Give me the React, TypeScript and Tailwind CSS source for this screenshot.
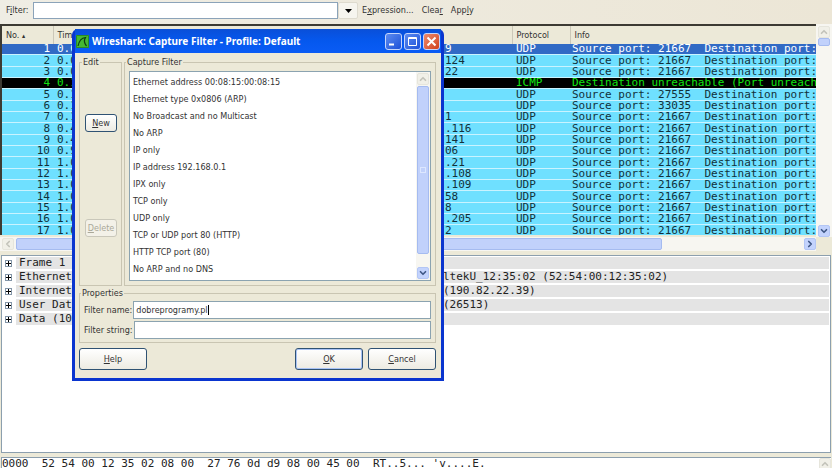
import type { ReactNode } from 'react';
import { ChevronDown, ChevronLeft, ChevronRight, ChevronUp } from 'lucide-react';
import { clsx } from 'clsx';

type Packet = {
  no: number;
  time: string;
  dest: string;
  protocol: string;
  info: string;
};

const udp = (no: number, time: string, dest: string, port = 21667): Packet => ({
  no,
  time,
  dest,
  protocol: 'UDP',
  info: `Source port: ${port}  Destination port:`,
});

const packets: Packet[] = [
  udp(1, '0.0', '9'),
  udp(2, '0.0', '124'),
  udp(3, '0.0', '22'),
  { no: 4, time: '0.1', dest: '', protocol: 'ICMP', info: 'Destination unreachable (Port unreach' },
  udp(5, '0.1', '', 27555),
  udp(6, '0.1', '', 33035),
  udp(7, '0.1', '1'),
  udp(8, '0.4', '.116'),
  udp(9, '0.4', '141'),
  udp(10, '0.9', '06'),
  udp(11, '1.0', '.21'),
  udp(12, '1.0', '.108'),
  udp(13, '1.0', '.109'),
  udp(14, '1.0', '58'),
  udp(15, '1.0', '8'),
  udp(16, '1.0', '.205'),
  udp(17, '1.0', '2'),
];

const details = [
  { label: 'Frame 1', rest: '' },
  { label: 'Ethernet', rest: 'ltekU_12:35:02 (52:54:00:12:35:02)' },
  { label: 'Internet', rest: '(190.82.22.39)' },
  { label: 'User Dat', rest: '(26513)' },
  { label: 'Data (10', rest: '' },
];

const filters = [
  'Ethernet address 00:08:15:00:08:15',
  'Ethernet type 0x0806 (ARP)',
  'No Broadcast and no Multicast',
  'No ARP',
  'IP only',
  'IP address 192.168.0.1',
  'IPX only',
  'TCP only',
  'UDP only',
  'TCP or UDP port 80 (HTTP)',
  'HTTP TCP port (80)',
  'No ARP and no DNS',
];

const scrollIcons = {
  up: ChevronUp,
  down: ChevronDown,
  left: ChevronLeft,
  right: ChevronRight,
};

function ScrollButton({ dir, disabled }: { dir: keyof typeof scrollIcons; disabled?: boolean }) {
  const Icon = scrollIcons[dir];
  return (
    <button
      aria-label={`Scroll ${dir}`}
      disabled={disabled}
      className={clsx(
        'flex size-3 shrink-0 items-center justify-center rounded-xs border',
        disabled ? 'border-[#e6e5dc] bg-[#f1f0e8] text-[#c3c3ba]' : 'border-[#b3c6f5] bg-[#c3d3fd] text-[#3f5786]',
      )}
    >
      <Icon size={10} strokeWidth={4} />
    </button>
  );
}

function DialogButton({
  children,
  className,
  disabled,
}: {
  children: ReactNode;
  className?: string;
  disabled?: boolean;
}) {
  return (
    <button
      disabled={disabled}
      className={clsx(
        'shrink-0 rounded-[3px] border',
        disabled
          ? 'border-[#c9c7ba] bg-[#f3f1e8] text-[#aaa899]'
          : 'border-[#2f5273] bg-linear-to-b from-white to-[#edebe2] text-[#333]',
        className,
      )}
    >
      {children}
    </button>
  );
}

function Toolbar() {
  return (
    <div className="flex h-6 shrink-0 items-start bg-linear-to-r from-[#efede4] to-[#ece6d6]">
      <label htmlFor="display-filter" className="w-[33px] pt-1 pl-[6px]">
        F<u>i</u>lter:
      </label>
      <input id="display-filter" className="mt-[2px] h-[17px] w-[305px] border border-[#8ba3b9] bg-white px-1" />
      <button
        aria-label="Filter history"
        className="mt-[2px] flex h-[17px] w-5 items-center justify-center rounded-xs border border-[#dedbcf] bg-[#f6f5ef]"
      >
        <svg width="7" height="4" viewBox="0 0 7 4">
          <path d="M0 0h7L3.500 4z" fill="#000" />
        </svg>
      </button>
      <div className="flex gap-2 pt-1 pl-1">
        <button>
          E<u>x</u>pression...
        </button>
        <button>
          Clea<u>r</u>
        </button>
        <button>
          App<u>l</u>y
        </button>
      </div>
    </div>
  );
}

function PacketList() {
  return (
    <div className="flex shrink-0">
      <div className="min-w-0 flex-1">
        <div className="h-[211px] overflow-hidden border-t-2 border-l-2 border-[#3c3a33] bg-white">
          <table className="h-[211px] w-full table-fixed border-collapse font-['DejaVu_Sans_Mono',monospace] text-[11px] leading-[10px] whitespace-pre">
            <colgroup>
              <col className="w-[51px]" />
              <col className="w-[390px]" />
              <col className="w-[69px]" />
              <col className="w-[58px]" />
              <col />
            </colgroup>
            <thead className="bg-[#ece9d8] text-left font-['DejaVu_Sans_Condensed','DejaVu_Sans',sans-serif] text-[9px]">
              <tr className="h-[18px]">
                <th className="border-r border-[#cbc7b8] pl-1 font-normal">
                  No. <span className="text-[7px]">▴</span>
                </th>
                <th className="pl-1 font-normal">Time</th>
                <th className="border-r border-[#cbc7b8]" />
                <th className="pl-1 font-normal">Protocol</th>
                <th className="border-l border-[#cbc7b8] pl-1 font-normal">Info</th>
              </tr>
            </thead>
            <tbody>
              {packets.map((p) => (
                <tr
                  key={p.no}
                  className={clsx(
                    'border-b border-[#c9f3ff]',
                    p.no === 1 && 'bg-[#316ac5] text-white',
                    p.no === 4 && 'bg-black text-[#12e412]',
                    p.no !== 1 && p.no !== 4 && 'bg-[#6fe0ff] text-[#12303a]',
                  )}
                >
                  <td className="pr-[3px] text-right">{p.no}</td>
                  <td className="pl-1">{p.time}</td>
                  <td className="pl-[2px]">{p.dest}</td>
                  <td className="pl-1">{p.protocol}</td>
                  <td className="pl-[2px]">{p.info}</td>
                </tr>
              ))}
            </tbody>
          </table>
        </div>
        <div className="mt-[2px] flex h-[14px] items-center bg-[#f7f6f1] pl-[2px]">
          <ScrollButton dir="left" disabled />
          <div className="flex-1 pl-[2px]">
            <div className="h-3 w-[82%] rounded-xs border border-[#a5bbf0] bg-[#c1d1fb]" />
          </div>
          <ScrollButton dir="right" />
        </div>
      </div>
      <div className="mb-[14px] flex w-4 flex-col items-center bg-[#f7f6f1] pt-[2px]">
        <ScrollButton dir="up" disabled />
        <div className="h-2 w-3 rounded-xs border border-[#a5bbf0] bg-[#c1d1fb]" />
        <div className="flex-1" />
        <ScrollButton dir="down" />
      </div>
    </div>
  );
}

function PacketDetails() {
  return (
    <div className="mt-1 mr-px ml-px min-h-0 flex-1 overflow-hidden border border-[#8c9fae] bg-white pr-px font-['DejaVu_Sans_Mono',monospace] text-[11px] leading-[12px] whitespace-pre text-[#222]">
      {details.map((row) => (
        <div key={row.label} className="flex h-[14px] items-center">
          <button
            aria-label={`Expand ${row.label}`}
            className="mr-1 ml-[3px] flex size-[7px] shrink-0 items-center justify-center border border-[#8496a8] bg-white"
          >
            <svg width="5" height="5" viewBox="0 0 5 5">
              <path d="M0 2.500h5M2.500 0v5" stroke="#000" />
            </svg>
          </button>
          <div className="flex h-3 flex-1 bg-[#e4e4e4] pl-[3px]">
            <span className="w-[424px] shrink-0">{row.label}</span>
            <span>{row.rest}</span>
          </div>
        </div>
      ))}
    </div>
  );
}

function PacketBytes() {
  return (
    <div className="mt-1 mr-px ml-px flex h-[11px] shrink-0 overflow-hidden border-t border-l border-[#8c9fae] bg-white font-['DejaVu_Sans_Mono',monospace] text-[11px] leading-[12px] whitespace-pre text-[#222]">
      <span className="w-[371px] shrink-0">0000  52 54 00 12 35 02 08 00  27 76 0d d9 08 00 45 00</span>
      <span className="flex-1">RT..5... 'v....E.</span>
      <ScrollButton dir="up" disabled />
    </div>
  );
}

function TitleBar() {
  const button = 'flex size-[17px] items-center justify-center rounded-[3px] border border-[#c5d5fb]';
  return (
    <div className="flex h-6 items-center bg-linear-to-b from-[#0a4fd8] via-[#0558ee] to-[#0a5cf5] pr-[1px] pl-[1px]">
      <svg width="13" height="13" viewBox="0 0 13 13" className="mr-[3px] shrink-0">
        <path d="M0 0h13v13H0z" fill="#45b833" />
        <path d="M.5.5h12v12H.5z" fill="none" stroke="#2a8a26" />
        <path d="M2 11C3 6 5 3 9.500 2.500C8 5 8 8 10.500 11" fill="none" stroke="#0b3d12" strokeWidth="1.200" />
      </svg>
      <h1 className="flex-1 font-['Noto_Sans',sans-serif] text-[10px] font-bold whitespace-nowrap text-white">
        Wireshark: Capture Filter - Profile: Default
      </h1>
      <div className="flex gap-[2px]">
        <button aria-label="Minimize" className={clsx(button, 'bg-linear-to-br from-[#5d8bf0] to-[#1c4fd8]')}>
          <svg width="11" height="11" viewBox="0 0 11 11">
            <path d="M1 8.500h5" stroke="#fff" strokeWidth="2" />
          </svg>
        </button>
        <button aria-label="Maximize" className={clsx(button, 'bg-linear-to-br from-[#5d8bf0] to-[#1c4fd8]')}>
          <svg width="11" height="11" viewBox="0 0 11 11">
            <path d="M1.500 1.500h8v8h-8zM1 2.500h9" fill="none" stroke="#fff" />
          </svg>
        </button>
        <button aria-label="Close" className={clsx(button, 'bg-linear-to-br from-[#ec8a6c] to-[#d13f16]')}>
          <svg width="11" height="11" viewBox="0 0 11 11">
            <path d="M1.500 1.500l8 8M9.500 1.500l-8 8" stroke="#fff" strokeWidth="2" />
          </svg>
        </button>
      </div>
    </div>
  );
}

function CaptureFilterDialog() {
  const group = 'min-w-0 border border-[#c9c5b2]';
  const field = 'h-[18px] w-full border border-[#8ba3b0] bg-white px-[2px] outline-none';
  return (
    <div
      role="dialog"
      className="absolute top-[29px] left-[72px] w-[372px] rounded-t-md border-x-[3px] border-b-[3px] border-[#0a35cf] bg-[#ece9d8]"
    >
      <TitleBar />
      <div className="pt-1 pr-[5px] pb-2 pl-1">
        <div className="flex gap-[2px]">
          <fieldset className={clsx(group, 'w-[43px] pl-[5px]')}>
            <legend className="-ml-[3px] px-px leading-[11px]">Edit</legend>
            <DialogButton className="mt-[46px] h-[18px] w-8">
              <u>N</u>ew
            </DialogButton>
            <DialogButton disabled className="mt-[87px] h-[18px] w-8">
              <u>D</u>elete
            </DialogButton>
          </fieldset>
          <fieldset className={clsx(group, 'flex-1 px-1 pb-1')}>
            <legend className="-ml-[3px] px-px leading-[11px]">Capture Filter</legend>
            <div className="mt-[3px] flex h-[210px] border border-[#8ba3b0] bg-white">
              <ul className="flex-1 pt-[2px] pl-[3px] leading-[17px]">
                {filters.map((f) => (
                  <li key={f}>{f}</li>
                ))}
              </ul>
              <div className="flex w-[14px] flex-col items-center bg-[#f7f6f1] py-px">
                <ScrollButton dir="up" disabled />
                <div className="my-px flex h-[168px] w-3 items-center justify-center rounded-xs border border-[#a5bbf0] bg-[#c1d1fb]">
                  <div className="size-[6px] border border-[#dde7ff]" />
                </div>
                <div className="flex-1" />
                <ScrollButton dir="down" />
              </div>
            </div>
          </fieldset>
        </div>
        <fieldset className={clsx(group, 'mt-[2px] px-1 pb-[3px]')}>
          <legend className="-ml-[3px] px-px leading-[11px]">Properties</legend>
          <div className="mt-[2px] flex items-center gap-px">
            <label htmlFor="filter-name">Filter name:</label>
            <div className="relative flex-1">
              <input id="filter-name" defaultValue="dobreprogramy.pl" className={field} />
              {/* text cursor at the end of the name */}
              <span className="absolute top-1 left-[75px] h-[10px] w-px bg-black" />
            </div>
          </div>
          <div className="mt-[2px] flex items-center gap-px">
            <label htmlFor="filter-string">Filter string:</label>
            <div className="flex-1">
              <input id="filter-string" className={field} />
            </div>
          </div>
        </fieldset>
        <div className="mt-[5px] flex gap-[5px]">
          <DialogButton className="h-[22px] w-[68px]">
            <u>H</u>elp
          </DialogButton>
          <div className="flex-1" />
          <DialogButton className="h-[22px] w-[68px] ring-1 ring-[#a9c3f5] ring-inset">
            <u>O</u>K
          </DialogButton>
          <DialogButton className="h-[22px] w-[68px]">
            <u>C</u>ancel
          </DialogButton>
        </div>
      </div>
    </div>
  );
}

export default function App() {
  return (
    <div className="relative flex h-screen flex-col overflow-hidden bg-[#ece9d8] font-['DejaVu_Sans_Condensed','DejaVu_Sans',sans-serif] text-[9px] leading-[13px] text-[#333]">
      <Toolbar />
      <PacketList />
      <PacketDetails />
      <PacketBytes />
      <CaptureFilterDialog />
    </div>
  );
}
